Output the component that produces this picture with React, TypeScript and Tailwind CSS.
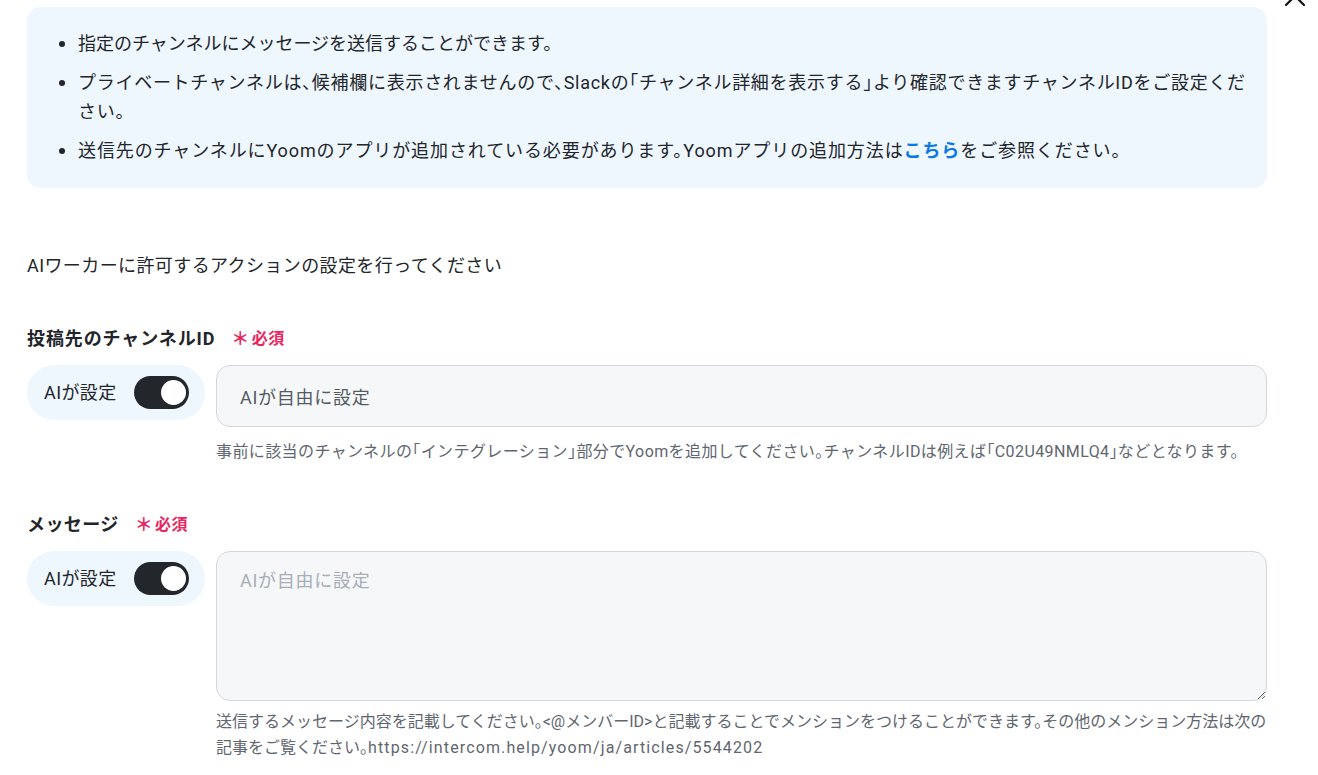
import React from "react";

const FONT = "Roboto, 'Noto Sans CJK JP', 'Noto Sans', sans-serif";

function Bullet({ children, className = "" }: { children: React.ReactNode; className?: string }) {
  return (
    <li className="flex items-start">
      <span className="w-[19px] h-[29px] flex items-center shrink-0">
        <span className="block w-[6px] h-[6px] rounded-full bg-[#22252a]" />
      </span>
      <span className={"leading-[29px] " + className}>{children}</span>
    </li>
  );
}

function Required() {
  return (
    <span className="ml-4 text-[16px] font-bold text-[#e8275f] flex items-center gap-[2px]">
      <span className="text-[18px] leading-none">＊</span>
      <span>必須</span>
    </span>
  );
}

function AiToggle() {
  return (
    <div className="w-[178px] h-[55px] shrink-0 rounded-full bg-[#eef6fe] flex items-center pl-[17px] gap-[17px]">
      <span className="text-[18px] text-[#22252a]">AIが設定</span>
      <button
        type="button"
        aria-pressed="true"
        className="w-[55px] h-[33px] rounded-full bg-[#23262b] flex items-center justify-end pr-[3px]"
      >
        <span className="block w-[25px] h-[25px] rounded-full bg-white" />
      </button>
    </div>
  );
}

export default function App() {
  return (
    <div
      className="relative w-full h-[775px] overflow-hidden bg-white text-[#22252a] tracking-[0.025em] [font-feature-settings:'halt']"
      style={{ fontFamily: FONT }}
    >
      {/* close button, scrolled partly out of view */}
      <button type="button" className="absolute left-[1285px] top-[-14px] w-[20px] h-[20px] text-[#111]">
        <svg viewBox="0 0 20 20" width="20" height="20" fill="none" stroke="currentColor" strokeWidth="2.2" strokeLinecap="round">
          <path d="M1 1 L19 19 M19 1 L1 19" />
        </svg>
      </button>

      <div className="pl-[27px] pr-[51px] pt-[7px]">
        {/* notes */}
        <div className="rounded-[14px] bg-[#eef6fe] pt-[22px] pb-[23px] pl-[32px] pr-[20px] text-[18px]">
          <ul className="flex flex-col gap-[10px]">
            <Bullet className="tracking-normal">指定のチャンネルにメッセージを送信することができます。</Bullet>
            <Bullet className="tracking-[0.04em]">
              プライベートチャンネルは、候補欄に表示されませんので、Slackの「チャンネル詳細を表示する」より確認できますチャンネルIDをご設定ください。
            </Bullet>
            <Bullet className="tracking-[0.05em]">
              送信先のチャンネルにYoomのアプリが追加されている必要があります。Yoomアプリの追加方法は
              <a className="font-bold text-[#0a78e6]">こちら</a>
              をご参照ください。
            </Bullet>
          </ul>
        </div>

        <p className="mt-[63px] text-[18px] leading-[29px]">AIワーカーに許可するアクションの設定を行ってください</p>

        {/* channel id */}
        <div className="mt-[44px] flex items-center h-[29px]">
          <span className="text-[18px] font-bold leading-[29px] tracking-[0.05em]">投稿先のチャンネルID</span>
          <Required />
        </div>
        <div className="mt-[12px] flex items-start gap-[11px]">
          <AiToggle />
          <input
            readOnly
            value="AIが自由に設定"
            className="flex-1 h-[62px] rounded-[14px] border border-[#d3d7dd] bg-[#f6f7f9] px-[23px] text-[18px] tracking-[0.04em] text-[#555b64] outline-none"
            style={{ fontFamily: FONT }}
          />
        </div>
        <p className="mt-[12px] ml-[189px] text-[16px] leading-[26px] text-[#5f6670]">
          事前に該当のチャンネルの「インテグレーション」部分でYoomを追加してください。チャンネルIDは例えば「C02U49NMLQ4」などとなります。
        </p>

        {/* message */}
        <div className="mt-[45px] flex items-center h-[29px]">
          <span className="text-[18px] font-bold leading-[29px]">メッセージ</span>
          <Required />
        </div>
        <div className="mt-[12px] flex items-start gap-[11px]">
          <AiToggle />
          <textarea
            placeholder="AIが自由に設定"
            className="flex-1 h-[150px] rounded-[14px] border border-[#d3d7dd] bg-[#f6f7f9] px-[23px] pt-[16px] text-[18px] leading-[26px] tracking-[0.04em] text-[#22252a] placeholder:text-[#a8aeb7] outline-none"
            style={{ fontFamily: FONT }}
          />
        </div>
        <div className="mt-[8px] ml-[189px] text-[16px] leading-[26px] tracking-normal text-[#5f6670]">
          <p className="whitespace-nowrap">
            送信するメッセージ内容を記載してください。&lt;@メンバーID&gt;と記載することでメンションをつけることができます。その他のメンション方法は次の
          </p>
          <p>
            記事をご覧ください。<span className="tracking-[0.07em]">https://intercom.help/yoom/ja/articles/5544202</span>
          </p>
        </div>
      </div>
    </div>
  );
}
